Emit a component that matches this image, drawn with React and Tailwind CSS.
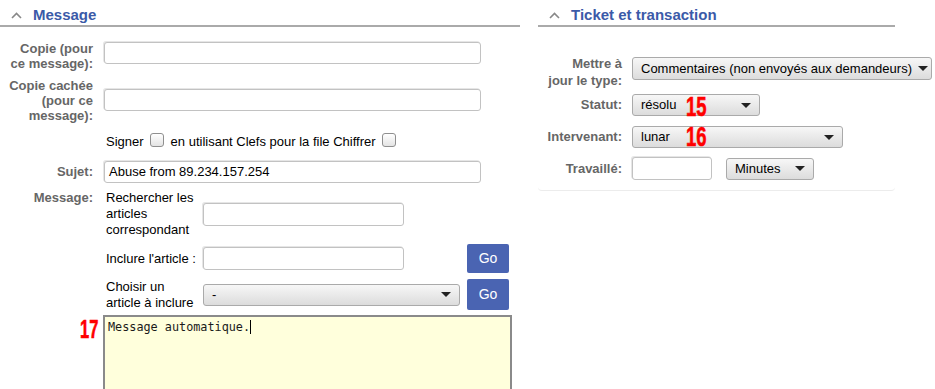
import React from 'react'

const labelCls = 'text-right font-bold text-[13px] text-[#666] shrink-0'

function Chevron() {
  return (
    <svg width="11" height="7" viewBox="0 0 11 7" className="shrink-0 mb-[5px]">
      <path d="M1 6 L5.5 1.5 L10 6" fill="none" stroke="#888" strokeWidth="1.6" />
    </svg>
  )
}

function Heading({ title }) {
  return (
    <div className="flex items-end h-[27px] pb-px pl-[11px] gap-[11px] border-b-2 border-[#aaa]">
      <Chevron />
      <h2 className="text-[15px] leading-[18px] font-bold text-[#3b5aa8]">{title}</h2>
    </div>
  )
}

function TextInput({ className = '', value = '' }) {
  return (
    <div
      className={`shrink-0 flex items-center bg-white border border-[#c2c2c2] rounded-[3px] shadow-[-1px_-1px_0_#e6e6e6] px-[4px] text-[13px] text-black ${className}`}
    >
      {value}
    </div>
  )
}

function Arrow() {
  return (
    <svg width="10" height="5" viewBox="0 0 10 5" className="shrink-0">
      <path d="M0 0 H10 L5 5 Z" fill="#222" />
    </svg>
  )
}

function Select({ value, className = '', children }) {
  return (
    <div
      className={`relative shrink-0 flex items-center justify-between gap-[6px] pl-[8px] pr-[8px] border border-[#aaa] rounded-[3px] bg-gradient-to-b from-[#f7f7f7] to-[#dcdcdc] text-[13px] text-black ${className}`}
    >
      <span className="whitespace-nowrap">{value}</span>
      <Arrow />
      {children}
    </div>
  )
}

function Checkbox() {
  return (
    <span className="inline-block w-[14px] h-[14px] rounded-[3px] border border-[#8f8f8f] bg-gradient-to-b from-white to-[#e4e4e4] shrink-0" />
  )
}

function GoButton({ className = '' }) {
  return (
    <div
      className={`shrink-0 w-[42px] flex items-center justify-center bg-[#4a64b2] rounded-[2px] text-white text-[14px] ${className}`}
    >
      Go
    </div>
  )
}

function Marker({ n, className = '' }) {
  return (
    <span
      className={`absolute inline-block origin-left scale-x-[0.66] font-bold text-[#f00] [-webkit-text-stroke:0.6px_#f00] ${className}`}
    >
      {n}
    </span>
  )
}

export default function App() {
  return (
    <div className="w-[935px] h-[389px] overflow-hidden bg-white font-['Liberation_Sans',Arial,sans-serif] text-[13px] text-black">
      <div className="flex">
        {/* Message */}
        <div className="w-[520px] shrink-0">
          <Heading title="Message" />

          <div className="mt-[14px] flex items-start">
            <div className={`${labelCls} w-[93px] leading-[15px]`}>
              Copie (pour
              <br />
              ce message):
            </div>
            <TextInput className="ml-[11px] mt-px w-[377px] h-[22px]" />
          </div>

          <div className="mt-[7px] flex items-start">
            <div className={`${labelCls} w-[93px] leading-[15px]`}>
              Copie cachée
              <br />
              (pour ce
              <br />
              message):
            </div>
            <TextInput className="ml-[11px] mt-[11px] w-[377px] h-[22px]" />
          </div>

          <div className="mt-[11px] ml-[106px] flex items-center h-[16px] leading-[16px]">
            <span>Signer</span>
            <span className="ml-[6px]"><Checkbox /></span>
            <span className="ml-[7px]">en utilisant Clefs pour la file Chiffrer</span>
            <span className="ml-[6px]"><Checkbox /></span>
          </div>

          <div className="mt-[11px] flex items-center">
            <div className={`${labelCls} w-[93px]`}>Sujet:</div>
            <TextInput className="ml-[11px] w-[377px] h-[22px]" value="Abuse from 89.234.157.254" />
          </div>

          <div className="mt-[7px] flex items-start">
            <div className={`${labelCls} w-[93px] leading-[16px]`}>Message:</div>
            <div className="ml-[13px] flex flex-col">
              <div className="flex items-start">
                <div className="w-[97px] leading-[16px]">
                  Rechercher les
                  <br />
                  articles
                  <br />
                  correspondant
                </div>
                <TextInput className="mt-[13px] w-[201px] h-[23px]" />
              </div>
              <div className="mt-[6px] flex items-center h-[29px]">
                <div className="w-[97px] leading-[16px]">Inclure l'article :</div>
                <TextInput className="w-[201px] h-[23px]" />
                <GoButton className="ml-[63px] h-[29px]" />
              </div>
              <div className="mt-[6px] flex items-center h-[31px]">
                <div className="w-[97px] leading-[16px]">
                  Choisir un
                  <br />
                  article à inclure
                </div>
                <Select value="-" className="w-[257px] h-[22px]" />
                <GoButton className="ml-[7px] h-[31px]" />
              </div>
            </div>
          </div>

          <div className="relative mt-[5px] ml-[103px]">
            <Marker n="17" className="left-[-23px] top-[5px] text-[25px] leading-[18px]" />
            <div className="w-[409px] h-[90px] border-2 border-[#8a8a8a] bg-[#ffffdc] px-[3px] pt-[3px] font-['DejaVu_Sans_Mono',monospace] text-[11.8px] leading-[15px] text-[#1a1a1a]">
              Message automatique.
              <span className="inline-block w-px h-[14px] bg-black align-middle -mt-[2px]" />
            </div>
          </div>
        </div>

        {/* Ticket et transaction */}
        <div className="ml-[18px] w-[357px] shrink-0">
          <Heading title="Ticket et transaction" />

          <div className="pb-[10px] border-b border-[#ececec] rounded-b-[4px]">
            <div className="mt-[28px] flex items-start">
              <div className={`${labelCls} w-[84px] leading-[17px]`}>
                Mettre à
                <br />
                jour le type:
              </div>
              <Select
                value="Commentaires (non envoyés aux demandeurs)"
                className="ml-[10px] mt-[2px] w-[300px] h-[23px]"
              />
            </div>

            <div className="mt-[5px] flex items-center h-[22px]">
              <div className={`${labelCls} w-[84px]`}>Statut:</div>
              <Select value="résolu" className="ml-[10px] w-[128px] h-[22px]">
                <Marker n="15" className="left-[53px] top-[2px] text-[28px] leading-[20px]" />
              </Select>
            </div>

            <div className="mt-[10px] flex items-center h-[22px]">
              <div className={`${labelCls} w-[84px]`}>Intervenant:</div>
              <Select value="lunar" className="ml-[10px] w-[211px] h-[22px]">
                <Marker n="16" className="left-[53px] top-0 text-[28px] leading-[20px]" />
              </Select>
            </div>

            <div className="mt-[9px] flex items-center h-[23px]">
              <div className={`${labelCls} w-[84px]`}>Travaillé:</div>
              <TextInput className="ml-[10px] w-[80px] h-[23px]" />
              <Select value="Minutes" className="ml-[14px] w-[88px] h-[22px]" />
            </div>
          </div>
        </div>
      </div>
    </div>
  )
}
